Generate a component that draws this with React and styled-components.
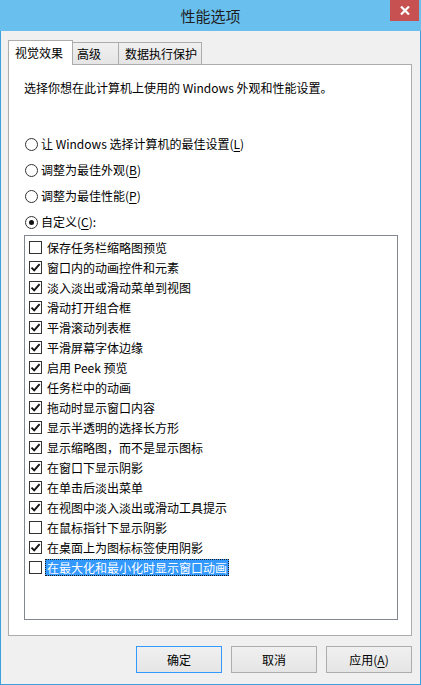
import React from "react";
import styled, { createGlobalStyle, css } from "styled-components";

const Global = createGlobalStyle`
  html, body { margin: 0; padding: 0; background: #f0f0f0; }
  body {
    font-family: "Noto Sans CJK SC", "Noto Sans", sans-serif;
    font-size: 12px;
    color: #000;
  }
  * { box-sizing: border-box; }
`;

const Window = styled.div`
  width: 421px;
  height: 685px;
  border: 1px solid #3d9fdc;
  border-top: none;
  background: #f0f0f0;
  display: flex;
  flex-direction: column;
`;

const TitleBar = styled.div`
  height: 31px;
  margin: 0 -1px;
  background: #69c0ef;
  display: grid;
  grid-template-columns: 1fr auto 1fr;
  align-items: center;
`;

const Title = styled.div`
  grid-column: 2;
  font-size: 15px;
  line-height: 31px;
  color: #1e1e1e;
`;

const CloseButton = styled.div`
  grid-column: 3;
  justify-self: end;
  align-self: start;
  width: 29px;
  height: 21px;
  margin-right: 2px;
  background: #c75050;
  display: flex;
  align-items: center;
  justify-content: center;
`;

const Body = styled.div`
  flex: 1;
  display: flex;
  flex-direction: column;
  padding: 9px 8px 0 7px;
`;

const TabStrip = styled.div`
  display: flex;
  align-items: flex-end;
  height: 24px;
`;

const Tab = styled.div`
  width: ${(p) => p.$w}px;
  border: 1px solid #acacac;
  border-bottom: none;
  display: flex;
  align-items: center;
  white-space: nowrap;
  line-height: 16px;
  ${(p) =>
    p.$active
      ? css`
          height: 25px;
          padding-left: 6px;
          margin-bottom: -1px;
          background: #fff;
          position: relative;
          z-index: 1;
        `
      : css`
          height: 22px;
          padding-left: ${p.$pad}px;
          margin-left: -1px;
          background: linear-gradient(#f0f0f0, #e5e5e5);
        `}
`;

const Panel = styled.div`
  height: 572px;
  border: 1px solid #acacac;
  background: #fff;
  display: flex;
  flex-direction: column;
  padding: 13px 13px 0 15px;
`;

const Description = styled.div`
  line-height: 20px;
  white-space: nowrap;
`;

const RadioGroup = styled.div`
  display: flex;
  flex-direction: column;
  gap: 6px;
  margin-top: 36px;
`;

const RadioRow = styled.label`
  display: flex;
  align-items: center;
  height: 20px;
  line-height: 20px;
  white-space: nowrap;
`;

const RadioCircle = styled.span`
  width: 13px;
  height: 13px;
  margin: 0 3px 0 1px;
  border: 1px solid #333;
  border-radius: 50%;
  background: #fff;
  display: flex;
  align-items: center;
  justify-content: center;
  &::after {
    content: "";
    width: 5px;
    height: 5px;
    border-radius: 50%;
    background: ${(p) => (p.$on ? "#111" : "transparent")};
  }
`;

const Key = styled.span`
  text-decoration: underline;
  text-underline-offset: 2px;
`;

const ListBox = styled.div`
  margin-top: 3px;
  height: 385px;
  border: 1px solid #828790;
  background: #fff;
  padding-top: 1px;
  display: flex;
  flex-direction: column;
`;

const ListRow = styled.div`
  display: flex;
  align-items: center;
  height: 20px;
  padding-left: 4px;
  white-space: nowrap;
`;

const CheckBox = styled.span`
  width: 13px;
  height: 13px;
  border: 1px solid #333;
  background: #fff;
  margin-right: 3px;
  display: flex;
  align-items: center;
  justify-content: center;
  flex: none;
`;

const ItemLabel = styled.span`
  height: 17px;
  line-height: 17px;
  padding: 0 2px;
  ${(p) =>
    p.$selected &&
    css`
      background: #3399ff;
      color: #fff;
      outline: 1px dotted #1a1a1a;
      outline-offset: -1px;
    `}
`;

const ButtonBar = styled.div`
  display: flex;
  justify-content: flex-end;
  gap: 9px;
  margin-top: 10px;
`;

const Button = styled.div`
  width: 86px;
  height: 27px;
  border: 1px solid ${(p) => (p.$default ? "#3399ff" : "#adadad")};
  background: linear-gradient(#f0f0f0, #e5e5e5);
  display: flex;
  align-items: center;
  justify-content: center;
  line-height: 16px;
`;

const Check = () => (
  <svg width="11" height="11" viewBox="0 0 11 11">
    <path d="M1.5 5.6 L4.2 8.3 L9.6 2.2" fill="none" stroke="#111" strokeWidth="1.9" />
  </svg>
);

const CloseGlyph = () => (
  <svg width="10" height="9" viewBox="0 0 10 9">
    <path d="M1 0.5 L9 8.5 M9 0.5 L1 8.5" stroke="#fff" strokeWidth="2.2" />
  </svg>
);

const effects = [
  ["保存任务栏缩略图预览", false],
  ["窗口内的动画控件和元素", true],
  ["淡入淡出或滑动菜单到视图", true],
  ["滑动打开组合框", true],
  ["平滑滚动列表框", true],
  ["平滑屏幕字体边缘", true],
  ["启用 Peek 预览", true],
  ["任务栏中的动画", true],
  ["拖动时显示窗口内容", true],
  ["显示半透明的选择长方形", true],
  ["显示缩略图，而不是显示图标", true],
  ["在窗口下显示阴影", true],
  ["在单击后淡出菜单", true],
  ["在视图中淡入淡出或滑动工具提示", true],
  ["在鼠标指针下显示阴影", false],
  ["在桌面上为图标标签使用阴影", true],
  ["在最大化和最小化时显示窗口动画", false, true],
];

const radios = [
  ["让 Windows 选择计算机的最佳设置(", "L", ")"],
  ["调整为最佳外观(", "B", ")"],
  ["调整为最佳性能(", "P", ")"],
  ["自定义(", "C", "):"],
];

export default function App() {
  return (
    <>
      <Global />
      <Window>
        <TitleBar>
          <Title>性能选项</Title>
          <CloseButton>
            <CloseGlyph />
          </CloseButton>
        </TitleBar>
        <Body>
          <TabStrip>
            <Tab $active $w={65}>视觉效果</Tab>
            <Tab $w={47} $pad={4}>高级</Tab>
            <Tab $w={84} $pad={6}>数据执行保护</Tab>
          </TabStrip>
          <Panel>
            <Description>选择你想在此计算机上使用的 Windows 外观和性能设置。</Description>
            <RadioGroup>
              {radios.map(([a, k, b], i) => (
                <RadioRow key={k}>
                  <RadioCircle $on={i === 3} />
                  {a}
                  <Key>{k}</Key>
                  {b}
                </RadioRow>
              ))}
            </RadioGroup>
            <ListBox>
              {effects.map(([text, on, selected]) => (
                <ListRow key={text}>
                  <CheckBox>{on && <Check />}</CheckBox>
                  <ItemLabel $selected={selected}>{text}</ItemLabel>
                </ListRow>
              ))}
            </ListBox>
          </Panel>
          <ButtonBar>
            <Button $default>确定</Button>
            <Button>取消</Button>
            <Button>
              应用(<Key>A</Key>)
            </Button>
          </ButtonBar>
        </Body>
      </Window>
    </>
  );
}
